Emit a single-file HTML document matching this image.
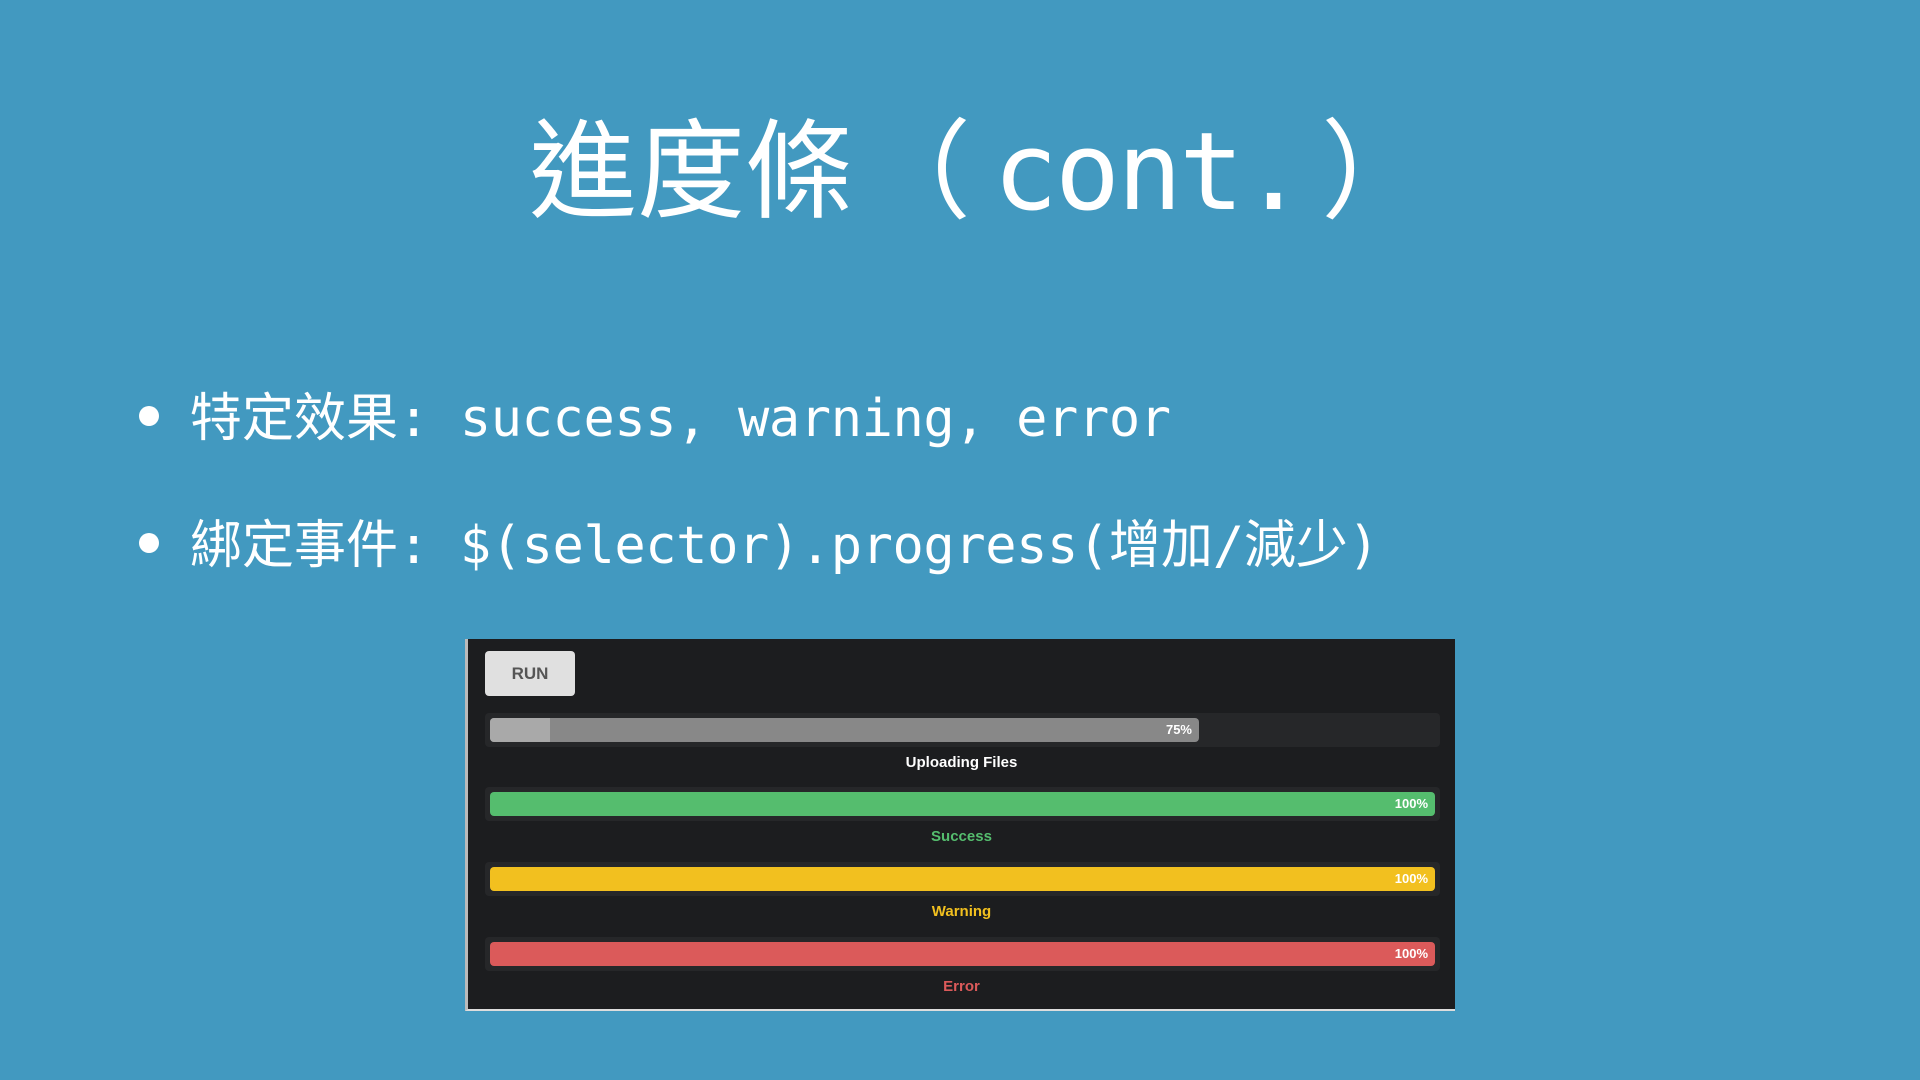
<!DOCTYPE html>
<html><head><meta charset="utf-8"><style>
body{margin:0;width:1920px;height:1080px;background:#4299c0;overflow:hidden;position:relative;font-family:"DejaVu Sans Mono","Liberation Mono","Noto Sans CJK TC",monospace;color:#fff}
.t{position:absolute;left:529px;top:88px;font-size:108px;line-height:150px;white-space:nowrap}
.b{position:absolute;left:190px;font-size:52px;line-height:70px;white-space:nowrap;letter-spacing:-0.4px}
.b:before{content:"";position:absolute;left:-51px;top:27px;width:20px;height:20px;border-radius:50%;background:#fff}
.c{font-family:"Noto Sans CJK TC",sans-serif;letter-spacing:0}
.p{position:absolute;left:465px;top:639px;width:990px;height:372px;background:#1c1d1f;border-left:3px solid #bbb;border-bottom:2px solid #ddd;box-sizing:border-box;font-family:"Liberation Sans",sans-serif}
.run{position:absolute;left:17px;top:12px;width:90px;height:45px;background:#e0e0e0;border-radius:4px;color:#555;font-size:17px;font-weight:bold;text-align:center;line-height:45px}
.tr{position:absolute;left:17px;width:955px;height:34px;background:#262729;border-radius:4px}
.bar{position:absolute;left:5px;top:5px;height:24px;border-radius:4px;font-size:13px;font-weight:bold;line-height:24px;text-align:right;box-sizing:border-box;padding-right:7px;color:#fff}
.l{position:absolute;left:0;width:987px;text-align:center;font-size:15px;font-weight:bold}
</style></head><body>
<div class="t"><span class="c">進度條</span><span class="c" style="margin-left:10px;margin-right:22px">（</span><span style="letter-spacing:-3px">cont.</span><span class="c" style="margin-left:18px">）</span></div>
<div class="b" style="top:379px"><span class="c">特定效果</span>: success, warning, error</div>
<div class="b" style="top:506px"><span class="c">綁定事件</span>: $(selector).progress(<span class="c">增加</span>/<span class="c">減少</span>)</div>
<div class="p">
<div class="run">RUN</div>
<div class="tr" style="top:74px"><div class="bar" style="width:709px;background:#888"><div style="position:absolute;left:0;top:0;width:60px;height:24px;background:#a9a9a9;border-radius:4px 0 0 4px"></div>75%</div></div>
<div class="l" style="top:115px;color:#fff">Uploading Files</div>
<div class="tr" style="top:148px"><div class="bar" style="width:945px;background:#55bd6e">100%</div></div>
<div class="l" style="top:189px;color:#55bd6e">Success</div>
<div class="tr" style="top:223px"><div class="bar" style="width:945px;background:#f2c01f">100%</div></div>
<div class="l" style="top:264px;color:#f2c01f">Warning</div>
<div class="tr" style="top:298px"><div class="bar" style="width:945px;background:#db5a5a">100%</div></div>
<div class="l" style="top:339px;color:#db5a5a">Error</div>
</div>
</body></html>
